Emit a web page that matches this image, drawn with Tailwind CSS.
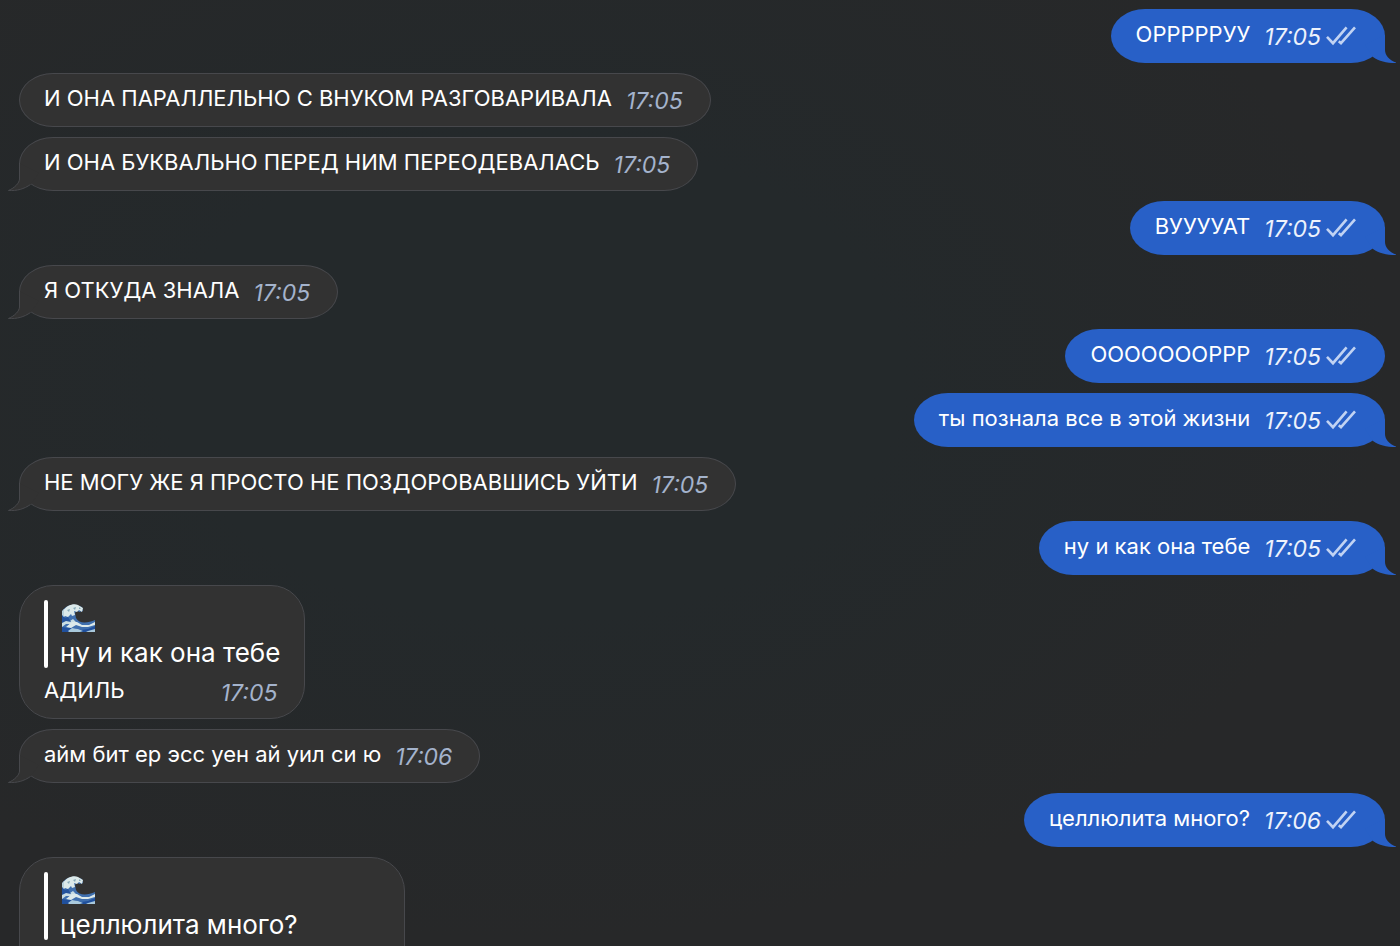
<!DOCTYPE html>
<html lang="ru">
<head>
<meta charset="utf-8">
<meta name="viewport" content="width=device-width, initial-scale=1">
<title>Чат</title>
<script src="https://cdn.jsdelivr.net/npm/@tailwindcss/browser@4"></script>
</head>
<body class="h-screen overflow-hidden bg-[#272829] bg-radial-[at_38%_40%] from-[#24292b] from-30% to-[#272829] to-70% font-['Inter','Noto_Sans',sans-serif] text-[22px] leading-7 text-white">

<!-- Shared shapes -->
<svg class="hidden" aria-hidden="true">
  <symbol id="ticks" viewBox="0 0 30 20">
    <g fill="none" stroke="#c1d3f3" stroke-width="2.6">
      <path d="M1 10.8 7 17.2 20.6 1.4"/>
      <path d="M12.8 15.2 15 17.2 29 1.4"/>
    </g>
  </symbol>
  <symbol id="tail-in" viewBox="0 0 32 28">
    <path d="M11 0V16C11 20 6.500 25 .5 27.500C9 28 16 26 22.500 21.500L31 10Z" fill="#323232"/>
    <path d="M11.500 0V16C11.500 20 6.500 25 .5 27.500C9 28 16 26 22.500 21.500" fill="none" stroke="#47484c"/>
  </symbol>
  <symbol id="tail-out" viewBox="0 0 32 28">
    <path d="M21 0V15C21 20 25 25 32 27.500V28C22 28 15 26 9 22L1 10Z" fill="#2860c7"/>
  </symbol>
  <symbol id="wave" viewBox="0 0 33 28">
    <path d="M0 8C2 3 8 0 14 1L20 3 21 7 17 8 15 6 13 9 14 14C17 20 26 19 33 16V28H0Z" fill="#3f6fae"/>
    <path d="M1 7C4 2 11-1 16 1L21 4 20 8 17 6 15 8 12 7 13 11 10 12 9 10 6 13 3 12 1 14Z" fill="#dbe9ea"/>
    <path d="M0 7 2 5V12L0 13Z" fill="#b9d2dc"/>
    <path d="M0 16 4 14 8 17 11 15 14 18 9 20 4 20 0 23Z" fill="#c9dde3"/>
    <path d="M0 11 3 14 6 13 9 18 4 17 0 19Z" fill="#24539c"/>
    <path d="M4 23 10 18 15 18 20 21 27 21 33 18V21L26 23 20 23 14 21 9 24Z" fill="#dce9ea"/>
    <path d="M0 23 6 24 13 24 19 26 26 25 33 22V26L24 28H0Z" fill="#20509d"/>
    <path d="M6 27 10 24 16 25 21 27 18 28H7ZM26 27 33 25V28H24Z" fill="#a9c9dc"/>
    <path d="M5 6 8 5 7 8ZM11 4 14 3 13 6ZM17 3 19 5 17 5Z" fill="#86a9b8"/>
  </symbol>
</svg>

<main>
<ul class="flex flex-col gap-2.5 pt-[9px] pr-[15px] pl-[19px]">

  <li class="relative flex gap-[14px] self-end rounded-[34px/27px] bg-[#2860c7] pt-[11px] pr-[29px] pb-[11px] pl-[25px]">
    <p>ОРРРРРУУ</p>
    <div class="mt-0.5 flex gap-[5px]"><time class="text-[23px] leading-[30px] italic text-[#edf2fc]">17:05</time><svg class="mt-1 h-5 w-[30px]" role="img" aria-label="Прочитано"><use href="#ticks"/></svg></div>
    <svg class="absolute -right-[11px] bottom-0 h-7 w-8" aria-hidden="true"><use href="#tail-out"/></svg>
  </li>

  <li class="relative flex gap-[14px] self-start rounded-[34px/27px] border border-[#47484c] bg-[#323232] pt-2.5 pr-[27px] pb-2.5 pl-6">
    <p>И ОНА ПАРАЛЛЕЛЬНО С ВНУКОМ РАЗГОВАРИВАЛА</p>
    <time class="mt-0.5 text-[23px] leading-[30px] italic text-[#a4b3cc]">17:05</time>
  </li>

  <li class="relative flex gap-[14px] self-start rounded-[34px/27px] border border-[#47484c] bg-[#323232] pt-2.5 pr-[27px] pb-2.5 pl-6">
    <p>И ОНА БУКВАЛЬНО ПЕРЕД НИМ ПЕРЕОДЕВАЛАСЬ</p>
    <time class="mt-0.5 text-[23px] leading-[30px] italic text-[#a4b3cc]">17:05</time>
    <svg class="absolute -bottom-px -left-3 h-7 w-8" aria-hidden="true"><use href="#tail-in"/></svg>
  </li>

  <li class="relative flex gap-[14px] self-end rounded-[34px/27px] bg-[#2860c7] pt-[11px] pr-[29px] pb-[11px] pl-[25px]">
    <p>ВУУУУАТ</p>
    <div class="mt-0.5 flex gap-[5px]"><time class="text-[23px] leading-[30px] italic text-[#edf2fc]">17:05</time><svg class="mt-1 h-5 w-[30px]" role="img" aria-label="Прочитано"><use href="#ticks"/></svg></div>
    <svg class="absolute -right-[11px] bottom-0 h-7 w-8" aria-hidden="true"><use href="#tail-out"/></svg>
  </li>

  <li class="relative flex gap-[14px] self-start rounded-[34px/27px] border border-[#47484c] bg-[#323232] pt-2.5 pr-[27px] pb-2.5 pl-6">
    <p>Я ОТКУДА ЗНАЛА</p>
    <time class="mt-0.5 text-[23px] leading-[30px] italic text-[#a4b3cc]">17:05</time>
    <svg class="absolute -bottom-px -left-3 h-7 w-8" aria-hidden="true"><use href="#tail-in"/></svg>
  </li>

  <li class="relative flex gap-[14px] self-end rounded-[34px/27px] bg-[#2860c7] pt-[11px] pr-[29px] pb-[11px] pl-[25px]">
    <p>ОООООООРРР</p>
    <div class="mt-0.5 flex gap-[5px]"><time class="text-[23px] leading-[30px] italic text-[#edf2fc]">17:05</time><svg class="mt-1 h-5 w-[30px]" role="img" aria-label="Прочитано"><use href="#ticks"/></svg></div>
  </li>

  <li class="relative flex gap-[14px] self-end rounded-[34px/27px] bg-[#2860c7] pt-[11px] pr-[29px] pb-[11px] pl-[25px]">
    <p>ты познала все в этой жизни</p>
    <div class="mt-0.5 flex gap-[5px]"><time class="text-[23px] leading-[30px] italic text-[#edf2fc]">17:05</time><svg class="mt-1 h-5 w-[30px]" role="img" aria-label="Прочитано"><use href="#ticks"/></svg></div>
    <svg class="absolute -right-[11px] bottom-0 h-7 w-8" aria-hidden="true"><use href="#tail-out"/></svg>
  </li>

  <li class="relative flex gap-[14px] self-start rounded-[34px/27px] border border-[#47484c] bg-[#323232] pt-2.5 pr-[27px] pb-2.5 pl-6">
    <p>НЕ МОГУ ЖЕ Я ПРОСТО НЕ ПОЗДОРОВАВШИСЬ УЙТИ</p>
    <time class="mt-0.5 text-[23px] leading-[30px] italic text-[#a4b3cc]">17:05</time>
    <svg class="absolute -bottom-px -left-3 h-7 w-8" aria-hidden="true"><use href="#tail-in"/></svg>
  </li>

  <li class="relative flex gap-[14px] self-end rounded-[34px/27px] bg-[#2860c7] pt-[11px] pr-[29px] pb-[11px] pl-[25px]">
    <p>ну и как она тебе</p>
    <div class="mt-0.5 flex gap-[5px]"><time class="text-[23px] leading-[30px] italic text-[#edf2fc]">17:05</time><svg class="mt-1 h-5 w-[30px]" role="img" aria-label="Прочитано"><use href="#ticks"/></svg></div>
    <svg class="absolute -right-[11px] bottom-0 h-7 w-8" aria-hidden="true"><use href="#tail-out"/></svg>
  </li>

  <li class="self-start rounded-[34px] border border-[#47484c] bg-[#323232] pt-3.5 pr-6 pb-2.5 pl-6">
    <blockquote class="flex gap-3">
      <span class="mb-0.5 w-1 rounded-full bg-white"></span>
      <div class="text-[26px] leading-[34px]">
        <div class="flex h-9 items-center pl-0.5"><svg class="h-7 w-[33px]" role="img" aria-label="Волна"><use href="#wave"/></svg></div>
        <p>ну и как она тебе</p>
      </div>
    </blockquote>
    <div class="mt-1.5 flex justify-between gap-[14px] pr-[3px]">
      <p>АДИЛЬ</p>
      <time class="mt-0.5 text-[23px] leading-[30px] italic text-[#a4b3cc]">17:05</time>
    </div>
  </li>

  <li class="relative flex gap-[14px] self-start rounded-[34px/27px] border border-[#47484c] bg-[#323232] pt-2.5 pr-[27px] pb-2.5 pl-6">
    <p>айм бит ер эсс уен ай уил си ю</p>
    <time class="mt-0.5 text-[23px] leading-[30px] italic text-[#a4b3cc]">17:06</time>
    <svg class="absolute -bottom-px -left-3 h-7 w-8" aria-hidden="true"><use href="#tail-in"/></svg>
  </li>

  <li class="relative flex gap-[14px] self-end rounded-[34px/27px] bg-[#2860c7] pt-[11px] pr-[29px] pb-[11px] pl-[25px]">
    <p>целлюлита много?</p>
    <div class="mt-0.5 flex gap-[5px]"><time class="text-[23px] leading-[30px] italic text-[#edf2fc]">17:06</time><svg class="mt-1 h-5 w-[30px]" role="img" aria-label="Прочитано"><use href="#ticks"/></svg></div>
    <svg class="absolute -right-[11px] bottom-0 h-7 w-8" aria-hidden="true"><use href="#tail-out"/></svg>
  </li>

  <li class="min-w-[386px] self-start rounded-[34px] border border-[#47484c] bg-[#323232] pt-3.5 pr-6 pb-12 pl-6">
    <blockquote class="flex gap-3">
      <span class="mb-0.5 w-1 rounded-full bg-white"></span>
      <div class="text-[26px] leading-[34px]">
        <div class="flex h-9 items-center pl-0.5"><svg class="h-7 w-[33px]" role="img" aria-label="Волна"><use href="#wave"/></svg></div>
        <p>целлюлита много?</p>
      </div>
    </blockquote>
  </li>
</ul>
</main>
</body>
</html>
